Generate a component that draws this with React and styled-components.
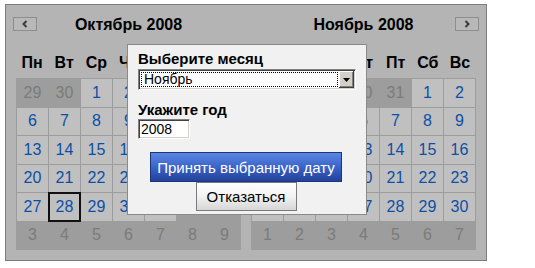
import React from "react";
import styled, { createGlobalStyle } from "styled-components";

const Global = createGlobalStyle`
  html, body { margin: 0; padding: 0; background: #fff; }
  body { font-family: "Liberation Sans", Arial, sans-serif; }
`;

const Frame = styled.div`
  position: relative;
  margin: 4px 0 0 5px;
  width: 460px;
  padding: 10px;
  border: 1px solid #7c7c7c;
  background: #b4b4b4;
  display: flex;
  gap: 10px;
`;

const Month = styled.div`
  width: 225px;
  display: flex;
  flex-direction: column;
`;

const Header = styled.div`
  height: 20px;
  display: flex;
  align-items: center;
  justify-content: center;
  position: relative;
`;

const Title = styled.div`
  font-weight: bold;
  font-size: 16px;
  color: #000;
  line-height: 20px;
`;

const NavButton = styled.div`
  position: absolute;
  top: 2px;
  ${(p) => (p.$side === "left" ? "left: -3px;" : "right: -3px;")}
  width: 22px;
  height: 12px;
  border: 1px solid #8e8e8e;
  background: #b8b8b8;
  display: flex;
  align-items: center;
  justify-content: center;
`;

const Weekdays = styled.div`
  margin-top: 12px;
  height: 31px;
  display: grid;
  grid-template-columns: repeat(7, 1fr);
  align-items: center;
`;

const Weekday = styled.div`
  text-align: center;
  font-weight: bold;
  font-size: 16px;
  color: #000;
`;

const Grid = styled.div`
  display: grid;
  grid-template-columns: repeat(7, 1fr);
  grid-auto-rows: 27.5px;
  gap: 1px;
  padding: 1px;
  background: #9d9d9d;
`;

const Day = styled.div`
  display: flex;
  align-items: center;
  justify-content: center;
  font-size: 16px;
  background: ${(p) => (p.$other ? "#9d9d9d" : "#c0c0c0")};
  color: ${(p) => (p.$other ? "#7b7b7b" : "#0d4fa6")};
  box-shadow: ${(p) =>
    p.$selected ? "0 0 0 1px #111, inset 0 0 0 1px #111" : "none"};
  position: relative;
`;

const Popup = styled.div`
  position: absolute;
  left: 121px;
  top: 39px;
  width: 216px;
  height: 164px;
  padding: 5px 12px 0 10px;
  border: 1px solid #8a8a8a;
  background: #f0f1f0;
  display: flex;
  flex-direction: column;
`;

const Label = styled.div`
  font-weight: bold;
  font-size: 15px;
  line-height: 18px;
  color: #000;
  margin-top: ${(p) => p.$mt || 0}px;
`;

const SelectBox = styled.div`
  margin-top: 1px;
  width: 212px;
  height: 15px;
  padding: 2px;
  background: #fff;
  border-style: solid;
  border-width: 1px;
  border-color: #808080 #fff #fff #808080;
  box-shadow: inset 1px 1px 0 #404040, inset -1px -1px 0 #d4d0c8;
  display: flex;
  align-items: stretch;
`;

const SelectValue = styled.div`
  flex: 1;
  border: 1px dotted #000;
  font-size: 14px;
  line-height: 13px;
  padding-left: 2px;
  color: #000;
  margin-right: 1px;
`;

const SelectArrow = styled.div`
  width: 15px;
  background: #d4d0c8;
  box-shadow: inset -1px -1px 0 #404040, inset 1px 1px 0 #fff,
    inset -2px -2px 0 #808080;
  display: flex;
  align-items: center;
  justify-content: center;
  margin: -1px -1px -1px 0;
`;

const YearInput = styled.div`
  width: 46px;
  height: 16px;
  padding: 1px 2px;
  background: #fff;
  border-style: solid;
  border-width: 1px;
  border-color: #808080 #fff #fff #808080;
  box-shadow: inset 1px 1px 0 #404040, inset -1px -1px 0 #d4d0c8;
  font-size: 14px;
  line-height: 16px;
  color: #000;
`;

const Buttons = styled.div`
  margin-top: 13px;
  display: flex;
  flex-direction: column;
  align-items: center;
`;

const Button = styled.div`
  box-sizing: border-box;
  width: ${(p) => p.$w}px;
  height: ${(p) => p.$h}px;
  display: flex;
  align-items: center;
  justify-content: center;
  font-size: 15px;
  border: 1px solid ${(p) => (p.$primary ? "#1b3679" : "#7a7a7a")};
  color: ${(p) => (p.$primary ? "#fff" : "#000")};
  background: ${(p) =>
    p.$primary
      ? "linear-gradient(#5b86e4, #3a64c8 50%, #23419a)"
      : "linear-gradient(#ffffff, #f2f2f2 50%, #d6d6d6)"};
`;

const octRows = [
  [29, 30, 1, 2, 3, 4, 5],
  [6, 7, 8, 9, 10, 11, 12],
  [13, 14, 15, 16, 17, 18, 19],
  [20, 21, 22, 23, 24, 25, 26],
  [27, 28, 29, 30, 31, 1, 2],
  [3, 4, 5, 6, 7, 8, 9],
];
const novRows = [
  [27, 28, 29, 30, 31, 1, 2],
  [3, 4, 5, 6, 7, 8, 9],
  [10, 11, 12, 13, 14, 15, 16],
  [17, 18, 19, 20, 21, 22, 23],
  [24, 25, 26, 27, 28, 29, 30],
  [1, 2, 3, 4, 5, 6, 7],
];

const weekdays = ["Пн", "Вт", "Ср", "Чт", "Пт", "Сб", "Вс"];

function Chevron({ dir }) {
  return (
    <svg width="8" height="8" viewBox="0 0 8 8">
      <polyline
        points={dir === "left" ? "5.5,1 2.5,4 5.5,7" : "2.5,1 5.5,4 2.5,7"}
        fill="none"
        stroke="#3c3c3c"
        strokeWidth="2"
      />
    </svg>
  );
}

function MonthView({ title, rows, nav, selected }) {
  return (
    <Month>
      <Header>
        <NavButton $side={nav}>
          <Chevron dir={nav} />
        </NavButton>
        <Title>{title}</Title>
      </Header>
      <Weekdays>
        {weekdays.map((w) => (
          <Weekday key={w}>{w}</Weekday>
        ))}
      </Weekdays>
      <Grid>
        {rows.map((row, ri) =>
          row.map((d, ci) => {
            const other = (ri === 0 && d > 20) || (ri >= 4 && d < 15);
            return (
              <Day
                key={`${ri}-${ci}`}
                $other={other}
                $selected={selected && !other && d === selected}
              >
                {d}
              </Day>
            );
          })
        )}
      </Grid>
    </Month>
  );
}

export default function App() {
  return (
    <>
      <Global />
      <Frame>
        <MonthView title="Октябрь 2008" rows={octRows} nav="left" selected={28} />
        <MonthView title="Ноябрь 2008" rows={novRows} nav="right" />
        <Popup>
          <Label $mt={0}>Выберите месяц</Label>
          <SelectBox>
            <SelectValue>Ноябрь</SelectValue>
            <SelectArrow>
              <svg width="7" height="4" viewBox="0 0 7 4">
                <polygon points="0,0 7,0 3.5,4" fill="#000" />
              </svg>
            </SelectArrow>
          </SelectBox>
          <Label $mt={11}>Укажите год</Label>
          <YearInput>2008</YearInput>
          <Buttons>
            <Button $primary $w={192} $h={30}>
              Принять выбранную дату
            </Button>
            <Button $w={101} $h={29}>
              Отказаться
            </Button>
          </Buttons>
        </Popup>
      </Frame>
    </>
  );
}
